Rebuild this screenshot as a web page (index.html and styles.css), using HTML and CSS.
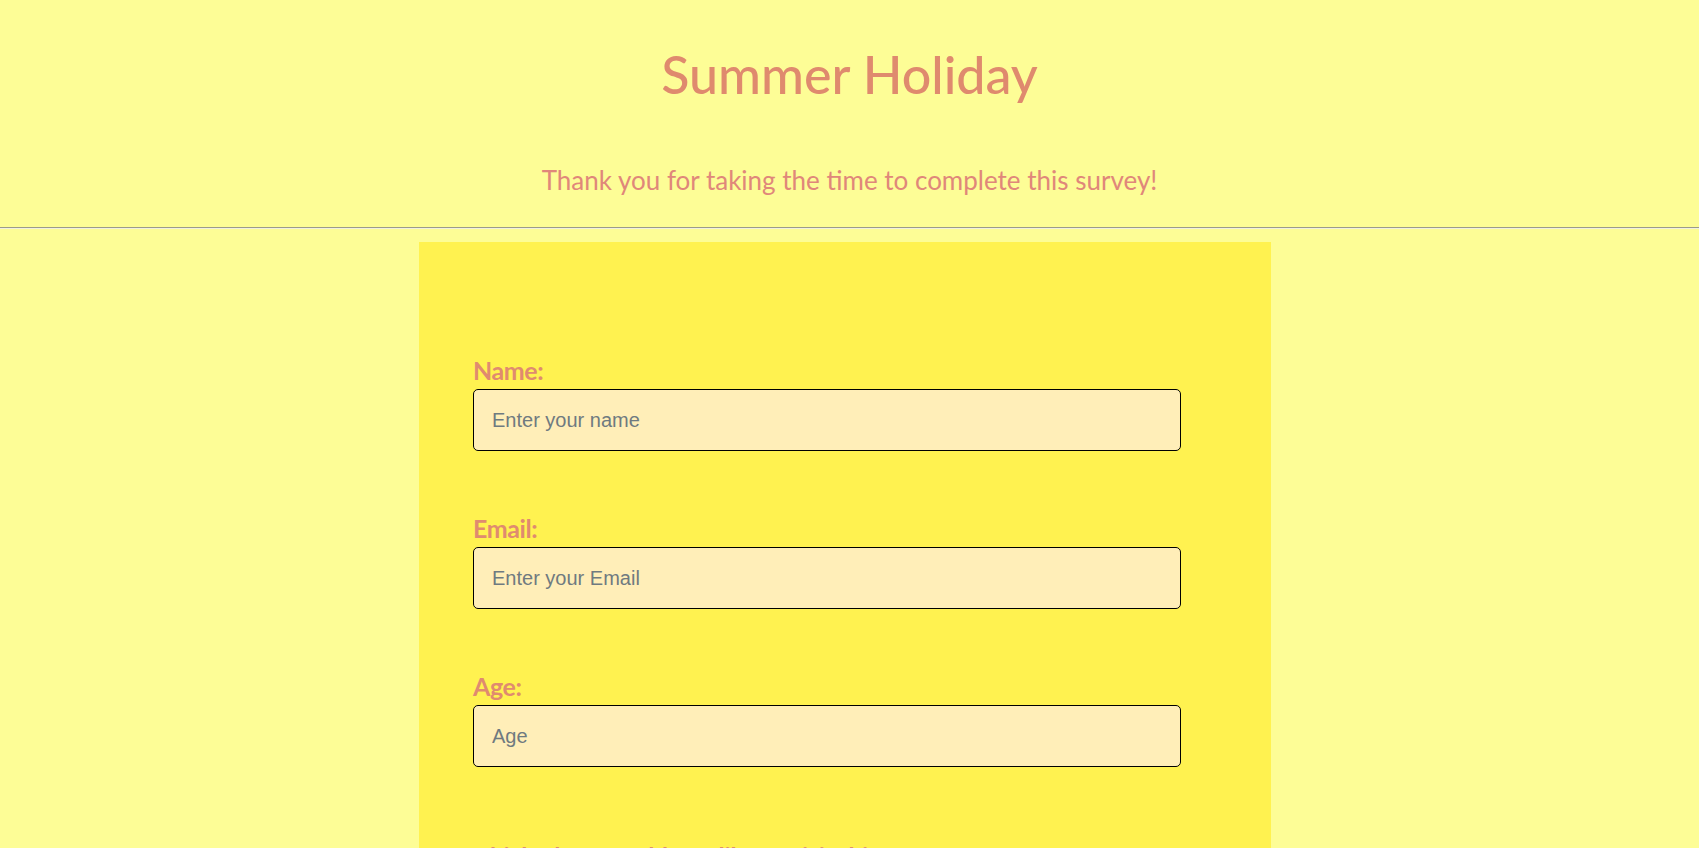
FILE: index.html
```html
<!DOCTYPE html>
<html lang="en">
<head>
<meta charset="utf-8">
<title>Summer Holiday Survey</title>
<link rel="stylesheet" href="styles.css">
</head>
<body>
<header class="header">
  <h1 class="title">Summer Holiday</h1>
  <p class="subtitle">Thank you for taking the time to complete this survey!</p>
</header>
<hr class="divider">
<form class="survey">
  <div class="group">
    <label class="label" for="name">Name:</label>
    <input class="field" id="name" type="text" placeholder="Enter your name">
  </div>
  <div class="group">
    <label class="label" for="email">Email:</label>
    <input class="field" id="email" type="email" placeholder="Enter your Email">
  </div>
  <div class="group">
    <label class="label" for="age">Age:</label>
    <input class="field" id="age" type="number" placeholder="Age">
  </div>
  <div class="question">
    <p class="question-title">Which place would you like to visit this summer?</p>
    <label class="option"><input type="radio" name="dest"> Beach</label>
    <label class="option"><input type="radio" name="dest"> Mountains</label>
    <label class="option"><input type="radio" name="dest"> City</label>
  </div>
</form>
</body>
</html>
```
FILE: styles.css
```css
html, body {
  margin: 0;
  padding: 0;
}
body {
  background: #fdfd96;
  font-family: Lato, "Noto Sans", sans-serif;
  color: #e08b6f;
}
.header {
  display: flex;
  flex-direction: column;
  align-items: center;
}
.title {
  margin: 42px 0 0;
  font-size: 52px;
  line-height: 64px;
  font-weight: 500;
  color: #df8a6e;
}
.subtitle {
  margin: 59px 0 0;
  font-size: 26px;
  line-height: 30px;
  color: #e0877a;
}
.divider {
  margin: 32px 0 0;
  height: 0;
  border: 0;
  border-top: 1px solid #9b9b8a;
  border-bottom: 1px solid #f1f1e0;
}
.survey {
  box-sizing: border-box;
  width: 852px;
  margin: 13px 0 0 419px;
  padding: 114px 0 60px 54px;
  background: #fff250;
  min-height: 900px;
}
.group {
  display: flex;
  flex-direction: column;
  align-items: flex-start;
  margin-bottom: 63px;
}
.label {
  font-size: 25px;
  line-height: 28px;
  font-weight: 700;
  color: #e08b6f;
  margin-bottom: 5px;
  letter-spacing: -0.4px;
}
.field {
  box-sizing: border-box;
  width: 708px;
  height: 62px;
  margin: 0;
  padding: 0 18px;
  border: 1px solid #000;
  border-radius: 5px;
  background: #ffeeb8;
  font-family: "Liberation Sans", Arial, sans-serif;
  font-size: 20px;
  color: #333;
}
.field::placeholder {
  color: #6f7a80;
  opacity: 1;
}
.question {
  margin-left: -8px;
  padding-top: 12px;
}
.question-title {
  margin: 0 0 12px;
  font-size: 24px;
  line-height: 30px;
  font-weight: 700;
  color: #e08b6f;
}
.option {
  display: block;
  font-size: 20px;
  line-height: 32px;
  color: #e08b6f;
}
```
